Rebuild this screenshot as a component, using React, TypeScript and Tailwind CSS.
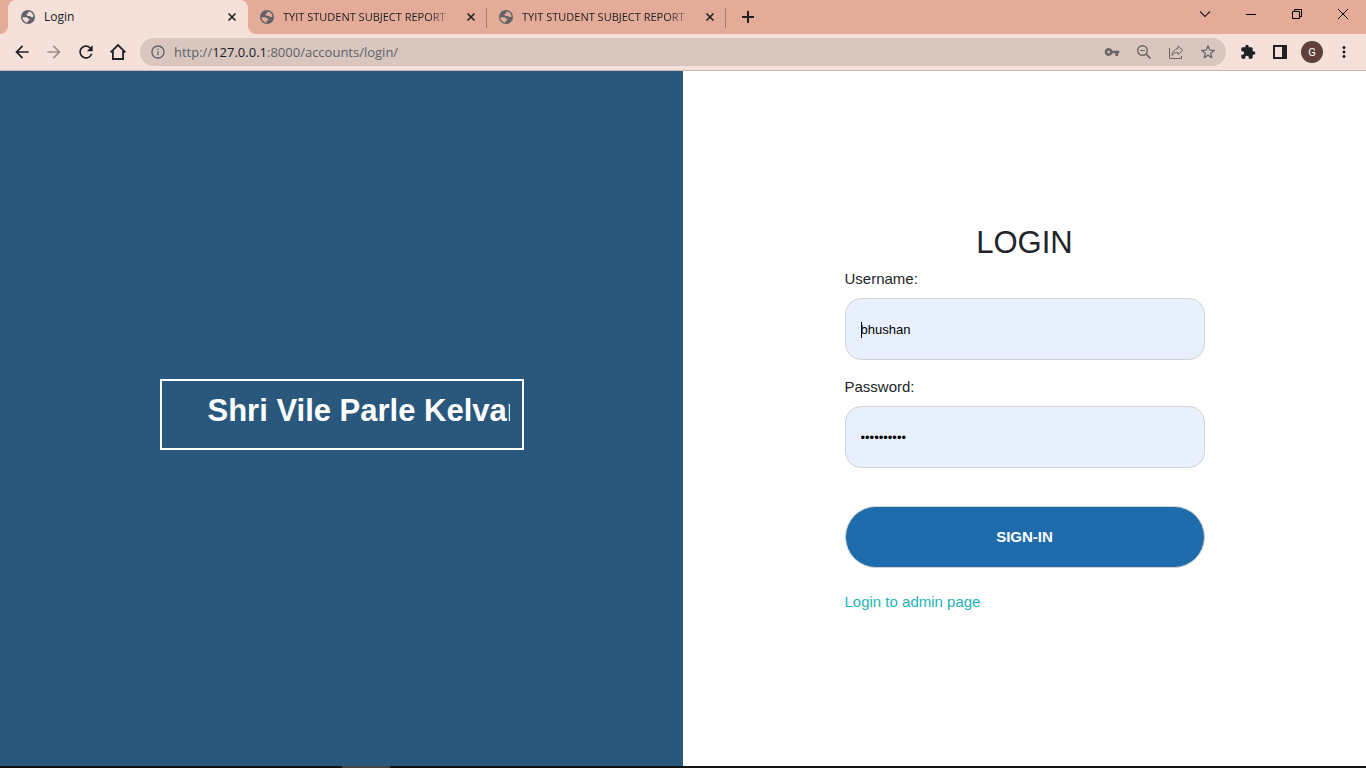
import React, { useState } from "react";
import {
  MdArrowBack,
  MdArrowForward,
  MdExtension,
  MdInfoOutline,
  MdMoreVert,
  MdRefresh,
  MdStarBorder,
  MdVpnKey,
} from "react-icons/md";

function GlobeIcon({ land }: { land: string }) {
  return (
    <svg className="size-4 shrink-0" viewBox="0 0 16 16" aria-hidden="true">
      <circle cx="8" cy="8" r="7" fill="#5f6368" />
      <g fill={land}>
        <path d="M8.6 2.5c2.6.2 4.6 2.3 4.9 4.9l-1.4.9-1.2-.3-.7-1H7.8L6.6 6V4.700l1.500-.3z" />
        <path d="M2.500 8.200h3.700c1.200 0 1.700.7 1.800 1.600h1.500c.4.9-.2 1.400-1 1.600l-.8.5v1.600C4.700 13.300 2.500 11 2.500 8.200z" />
      </g>
    </svg>
  );
}

function CloseIcon() {
  return (
    <svg className="size-4" viewBox="0 0 16 16" fill="none" stroke="#202124" strokeWidth="1.6" aria-hidden="true">
      <path d="M4.500 4.500l7 7M11.500 4.500l-7 7" />
    </svg>
  );
}

function BrowserTab({ title, active = false }: { title: string; active?: boolean }) {
  return (
    <div
      className={
        active
          ? "relative flex h-[34px] w-60 min-w-0 items-center rounded-t-lg bg-[#f5e1da] pl-3 pr-2"
          : "relative flex h-[34px] w-[239px] min-w-0 items-center pl-[11px] pr-2"
      }
    >
      {active && (
        <>
          <svg className="absolute -left-2 bottom-0 size-2" viewBox="0 0 8 8" aria-hidden="true">
            <path d="M8 0v8H0a8 8 0 0 0 8-8z" fill="#f5e1da" />
          </svg>
          <svg className="absolute -right-2 bottom-0 size-2" viewBox="0 0 8 8" aria-hidden="true">
            <path d="M0 0v8h8a8 8 0 0 1-8-8z" fill="#f5e1da" />
          </svg>
        </>
      )}
      <GlobeIcon land={active ? "#f5e1da" : "#e4ab99"} />
      <span
        className={
          active
            ? "ml-2 flex-1 overflow-hidden whitespace-nowrap text-[12px] leading-4"
            : "ml-2 flex-1 overflow-hidden whitespace-nowrap text-[11px] leading-4 [mask-image:linear-gradient(to_right,black_145px,transparent_174px)]"
        }
      >
        {title}
      </span>
      <button type="button" aria-label={`Close ${title}`} className="ml-2 shrink-0">
        <CloseIcon />
      </button>
      {!active && <span className="absolute right-0 top-2 h-5 w-px bg-[#a17b70]" />}
    </div>
  );
}

function IconButton({ label, children }: { label: string; children: React.ReactNode }) {
  return (
    <button type="button" aria-label={label} className="flex size-8 shrink-0 items-center justify-center">
      {children}
    </button>
  );
}

function TabStrip() {
  return (
    <div className="flex h-[34px] bg-[#e4ab99] pl-2 text-[#202124]">
      <BrowserTab title="Login" active />
      <BrowserTab title="TYIT STUDENT SUBJECT REPORT" />
      <BrowserTab title="TYIT STUDENT SUBJECT REPORT" />
      <button type="button" aria-label="New tab" className="ml-[14px] flex w-4 shrink-0 items-center">
        <svg className="size-4" viewBox="0 0 16 16" stroke="#202124" strokeWidth="2" aria-hidden="true">
          <path d="M8 2v12M2 8h12" />
        </svg>
      </button>
      <div className="ml-auto flex">
        <button type="button" aria-label="Search tabs" className="flex h-7 w-[46px] items-center justify-center">
          <svg className="size-3" viewBox="0 0 12 12" fill="none" stroke="#202124" strokeWidth="1.100" aria-hidden="true">
            <path d="M1 3.500l5 5 5-5" />
          </svg>
        </button>
        <button type="button" aria-label="Minimize" className="flex h-7 w-[46px] items-center justify-center">
          <svg className="size-3" viewBox="0 0 12 12" fill="#000" aria-hidden="true">
            <path d="M1 6h10v1H1z" />
          </svg>
        </button>
        <button type="button" aria-label="Restore" className="flex h-7 w-[46px] items-center justify-center">
          <svg className="size-3" viewBox="0 0 12 12" fill="none" stroke="#000" aria-hidden="true">
            <path d="M1.500 3.500h7v7h-7zM3.500 3.500v-2h7v7h-2" />
          </svg>
        </button>
        <button type="button" aria-label="Close window" className="flex h-7 w-[46px] items-center justify-center">
          <svg className="size-3" viewBox="0 0 12 12" fill="none" stroke="#000" aria-hidden="true">
            <path d="M1 1l10 10M11 1L1 11" />
          </svg>
        </button>
      </div>
    </div>
  );
}

function Toolbar() {
  return (
    <div className="flex h-[37px] items-center border-b border-[#c9b8b2] bg-[#f5e1da] px-[6px] text-[#202124]">
      <IconButton label="Back">
        <MdArrowBack size={20} />
      </IconButton>
      <IconButton label="Forward">
        <MdArrowForward size={20} color="#9c908d" />
      </IconButton>
      <IconButton label="Reload">
        <MdRefresh size={20} />
      </IconButton>
      <IconButton label="Home">
        <svg className="size-5" viewBox="0 0 20 20" fill="none" stroke="#202124" strokeWidth="1.8" aria-hidden="true">
          <path d="M2.600 10.400L10 3l7.400 7.400M4.900 9v8h10.200V9" />
        </svg>
      </IconButton>
      <div className="ml-[6px] flex h-7 min-w-0 flex-1 items-center rounded-full bg-[#d8c6bf] pl-[10px] pr-[2px] text-[#5f6368]">
        <MdInfoOutline size={16} className="shrink-0" />
        <span className="ml-2 flex-1 truncate text-[13px] leading-5">
          http://<span className="text-[#202124]">127.0.0.1</span>:8000/accounts/login/
        </span>
        <IconButton label="Saved password">
          <MdVpnKey size={16} color="#6b6665" />
        </IconButton>
        <IconButton label="Zoom">
          <svg className="size-4" viewBox="0 0 16 16" fill="none" stroke="#6b6665" strokeWidth="1.400" aria-hidden="true">
            <circle cx="6.500" cy="6.500" r="4.800" />
            <path d="M4 6.500h5" strokeWidth="1" />
            <path d="M10 10l4.500 4.500" strokeWidth="1.700" />
          </svg>
        </IconButton>
        <IconButton label="Share">
          <svg className="size-4" viewBox="0 0 16 16" fill="none" stroke="#6b6665" strokeWidth="1" aria-hidden="true">
            <path d="M1.500 4v10.500h12V12M10 2l4.800 4.300-4.800 4.200V8.300C7.500 8.300 5.500 9.300 4 11.500c.4-3.800 2.600-6.500 6-7z" />
          </svg>
        </IconButton>
        <IconButton label="Bookmark">
          <MdStarBorder size={18} />
        </IconButton>
      </div>
      <div className="ml-[6px] flex">
        <IconButton label="Extensions">
          <MdExtension size={16} />
        </IconButton>
        <IconButton label="Side panel">
          <svg className="size-4" viewBox="0 0 16 16" aria-hidden="true">
            <path fill="#202124" fillRule="evenodd" d="M1 1h14v14H1zM3 3v10h7V3z" />
          </svg>
        </IconButton>
        <IconButton label="Profile">
          <span className="flex size-[22px] items-center justify-center rounded-full bg-[#5d4037] font-[Roboto,sans-serif] text-[11px] leading-none text-white">
            G
          </span>
        </IconButton>
        <IconButton label="Menu">
          <MdMoreVert size={18} />
        </IconButton>
      </div>
    </div>
  );
}

const fieldClass =
  "h-[62px] w-full rounded-2xl border border-[#d3d3d3] bg-[#e8f0fe] px-[15px] text-[13px] text-black outline-none";

function LoginForm() {
  const [username, setUsername] = useState("bhushan");
  const [password, setPassword] = useState("kelavani12");
  return (
    <form className="flex w-[360px] max-w-full flex-col" onSubmit={(e) => e.preventDefault()}>
      <h1 className="text-center text-[31px] leading-10">LOGIN</h1>
      <label htmlFor="username" className="mb-[7px] mt-1 text-[15px] leading-6">
        Username:
      </label>
      <div className="relative">
        <input
          id="username"
          type="text"
          value={username}
          onChange={(e) => setUsername(e.target.value)}
          className={fieldClass}
        />
        <span className="pointer-events-none absolute left-4 top-6 h-4 w-px bg-black" />
      </div>
      <label htmlFor="password" className="mb-[7px] mt-[15px] text-[15px] leading-6">
        Password:
      </label>
      <input
        id="password"
        type="password"
        value={password}
        onChange={(e) => setPassword(e.target.value)}
        className={fieldClass}
      />
      <button
        type="submit"
        className="mt-[38px] h-[62px] rounded-full border border-[#d3d3d3] bg-[#1f6cad] text-[15px] font-bold text-white"
      >
        SIGN-IN
      </button>
      <a href="#admin" className="mt-[22px] self-start text-[15px] leading-6 text-[#1fb5b5]">
        Login to admin page
      </a>
    </form>
  );
}

export default function App() {
  return (
    <div className="flex min-h-screen flex-col bg-white font-['Liberation_Sans',Arial,sans-serif] text-[#212529]">
      <header className="font-['Open_Sans','Noto_Sans',sans-serif]">
        <TabStrip />
        <Toolbar />
      </header>
      <main className="grid flex-1 grid-cols-2">
        <section className="flex items-center justify-center bg-[#29587c] pb-2">
          <div className="h-[71px] w-[364px] max-w-full border-2 border-white px-3 pt-[10px] text-white">
            <p className="overflow-hidden whitespace-nowrap pl-[34px] text-[31px] font-bold leading-10">
              Shri Vile Parle Kelvani
            </p>
          </div>
        </section>
        <section className="flex items-center justify-center">
          <LoginForm />
        </section>
      </main>
      <footer className="flex h-[2px] bg-[#101214]">
        <div className="ml-[25%] h-full w-12 bg-[#444444]" />
      </footer>
    </div>
  );
}
